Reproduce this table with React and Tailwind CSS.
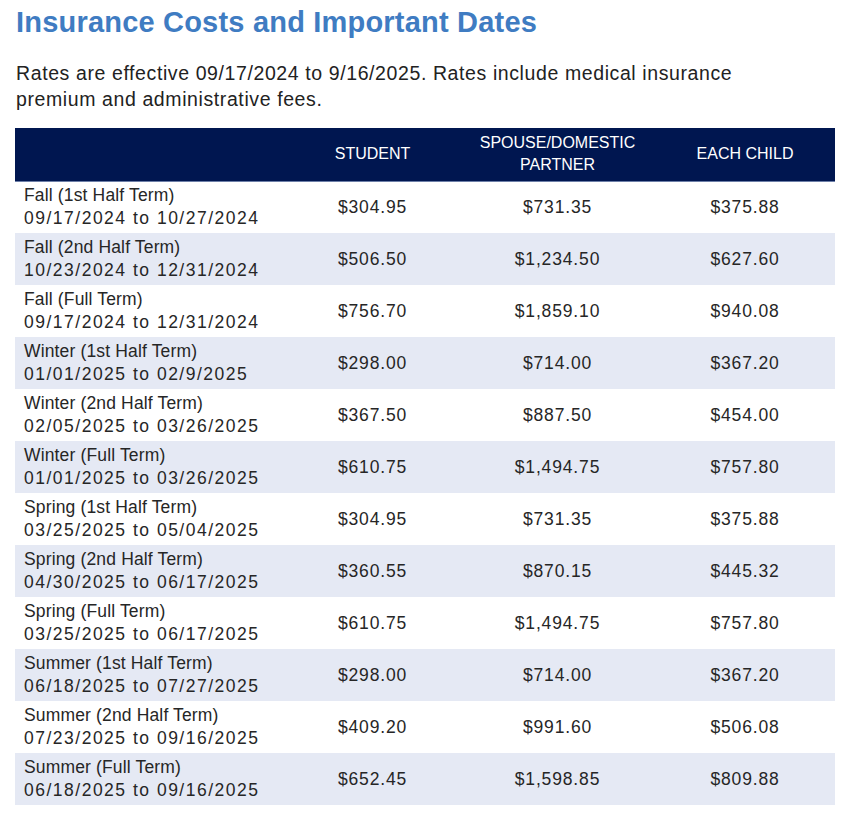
import React from 'react'

const rows = [
  ['Fall (1st Half Term)', '09/17/2024 to 10/27/2024', '$304.95', '$731.35', '$375.88'],
  ['Fall (2nd Half Term)', '10/23/2024 to 12/31/2024', '$506.50', '$1,234.50', '$627.60'],
  ['Fall (Full Term)', '09/17/2024 to 12/31/2024', '$756.70', '$1,859.10', '$940.08'],
  ['Winter (1st Half Term)', '01/01/2025 to 02/9/2025', '$298.00', '$714.00', '$367.20'],
  ['Winter (2nd Half Term)', '02/05/2025 to 03/26/2025', '$367.50', '$887.50', '$454.00'],
  ['Winter (Full Term)', '01/01/2025 to 03/26/2025', '$610.75', '$1,494.75', '$757.80'],
  ['Spring (1st Half Term)', '03/25/2025 to 05/04/2025', '$304.95', '$731.35', '$375.88'],
  ['Spring (2nd Half Term)', '04/30/2025 to 06/17/2025', '$360.55', '$870.15', '$445.32'],
  ['Spring (Full Term)', '03/25/2025 to 06/17/2025', '$610.75', '$1,494.75', '$757.80'],
  ['Summer (1st Half Term)', '06/18/2025 to 07/27/2025', '$298.00', '$714.00', '$367.20'],
  ['Summer (2nd Half Term)', '07/23/2025 to 09/16/2025', '$409.20', '$991.60', '$506.08'],
  ['Summer (Full Term)', '06/18/2025 to 09/16/2025', '$652.45', '$1,598.85', '$809.88'],
]

const App = () => {
  return (
    <div className="bg-white px-[15px] pt-[3px] pb-4 font-['Liberation_Sans',Arial,sans-serif] text-[#222]">
      <h1 className="pl-[1px] text-[29px] leading-[38px] font-bold text-[#3f7cc2] tracking-[0.2px]">
        Insurance Costs and Important Dates
      </h1>
      <p className="mt-[19px] pl-[1px] text-[19.5px] leading-[26px] text-[#222] tracking-[0.6px] max-w-[780px]">
        Rates are effective 09/17/2024 to 9/16/2025. Rates include medical insurance premium and administrative fees.
      </p>
      <table className="mt-[16px] w-[820px] border-collapse table-fixed">
        <colgroup>
          <col className="w-[270px]" />
          <col className="w-[175px]" />
          <col className="w-[195px]" />
          <col className="w-[180px]" />
        </colgroup>
        <thead>
          <tr className="bg-[#001650] text-white text-[16px] leading-[22px] h-[53px] border-b border-[#6d7fa8]">
            <th className="font-normal"></th>
            <th className="font-normal text-center">STUDENT</th>
            <th className="font-normal text-center px-2">SPOUSE/DOMESTIC PARTNER</th>
            <th className="font-normal text-center">EACH CHILD</th>
          </tr>
        </thead>
        <tbody>
          {rows.map((r, i) => (
            <tr key={i} className={`h-[52px] text-[17.5px] leading-[23px] text-[#262626] ${i % 2 === 1 ? 'bg-[#e5e9f4]' : 'bg-white'}`}>
              <td className="pl-[9px] align-middle">
                <div className="tracking-[0.15px]">{r[0]}</div>
                <div className="tracking-[1.5px]">{r[1]}</div>
              </td>
              <td className="text-center tracking-[0.85px]">{r[2]}</td>
              <td className="text-center tracking-[0.85px]">{r[3]}</td>
              <td className="text-center tracking-[0.85px]">{r[4]}</td>
            </tr>
          ))}
        </tbody>
      </table>
    </div>
  )
}

export default App
